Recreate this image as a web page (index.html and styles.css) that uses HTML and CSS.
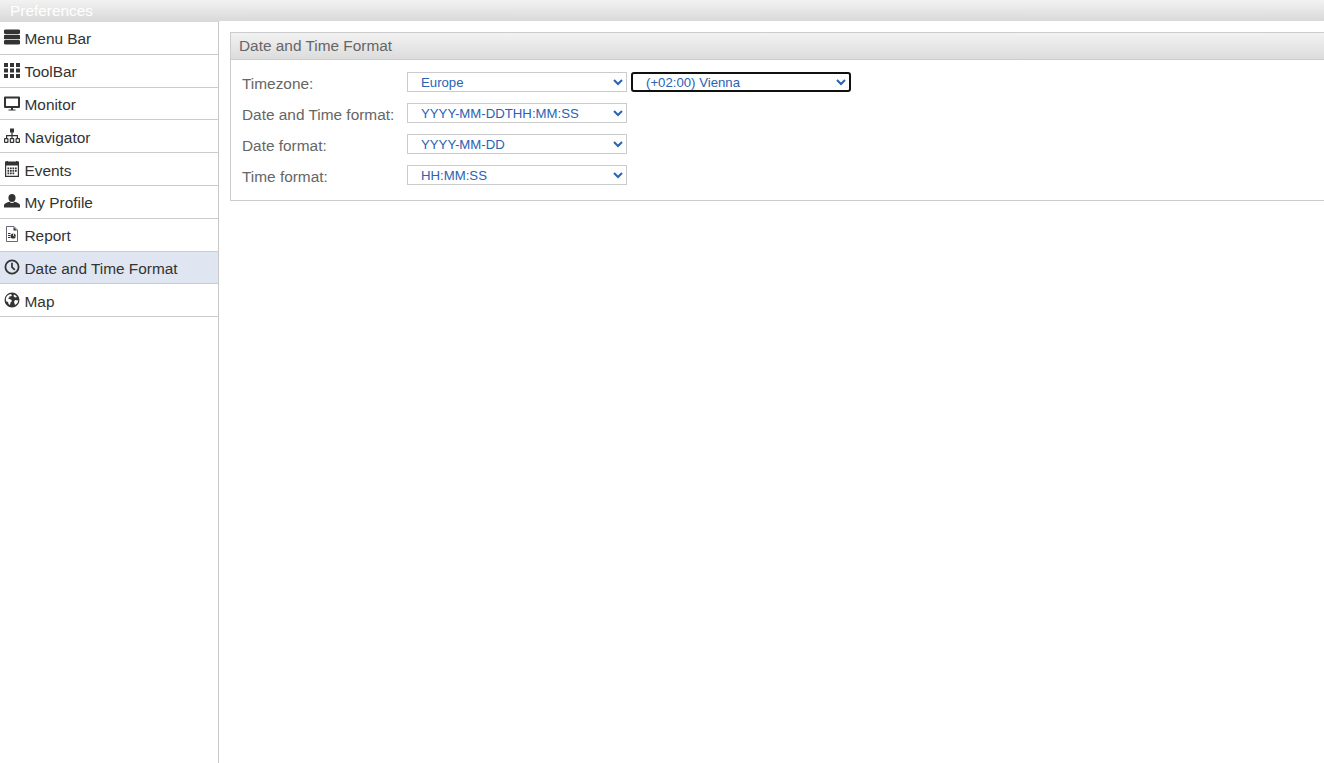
FILE: index.html
```html
<!DOCTYPE html>
<html lang="en">
<head>
    <meta charset="UTF-8">
    <meta name="viewport" content="width=device-width, initial-scale=1.0">
    <title>Preferences</title>
    <link rel="stylesheet" href="styles.css">
</head>
<body>
    <div class="title-bar">Preferences</div>
    <div class="content">
        <ul class="menu">
            <li>
                <svg class="icon" viewBox="0 0 16 16"><path d="M1.500.500h13a2 2 0 0 1 0 4.500h-13a2 2 0 0 1 0-4.500zM1.500 5.800h13a2 2 0 0 1 0 4.500h-13a2 2 0 0 1 0-4.500zM1.500 11h13a2 2 0 0 1 0 4.500h-13a2 2 0 0 1 0-4.500z"/></svg>
                Menu Bar
            </li>
            <li>
                <svg class="icon" viewBox="0 0 16 16"><path d="M0 1h4v4H0zM6 1h4v4H6zM12 1h4v4h-4zM0 6.500h4v4H0zM6 6.500h4v4H6zM12 6.500h4v4h-4zM0 12h4v4H0zM6 12h4v4H6zM12 12h4v4h-4z"/></svg>
                ToolBar
            </li>
            <li>
                <svg class="icon" viewBox="0 0 16 16"><path fill-rule="evenodd" d="M1 1.500h14a1 1 0 0 1 1 1v9.500a1 1 0 0 1-1 1H1a1 1 0 0 1-1-1V2.500a1 1 0 0 1 1-1zM2 3.500v7.500h12V3.500zM7 13h2v1.500h2.500v1h-7v-1H7z"/></svg>
                Monitor
            </li>
            <li>
                <svg class="icon" viewBox="0 0 16 16"><path fill-rule="evenodd" d="M6 .5h4V4.500H8.600V7H14v3h1a1 1 0 0 1 1 1v3a1 1 0 0 1-1 1h-2.500a1 1 0 0 1-1-1v-3a1 1 0 0 1 1-1h.3V8.300H8.600V10h.7a1 1 0 0 1 1 1v3a1 1 0 0 1-1 1H6.700a1 1 0 0 1-1-1v-3a1 1 0 0 1 1-1h.7V8.300H3.200V10h.3a1 1 0 0 1 1 1v3a1 1 0 0 1-1 1H1a1 1 0 0 1-1-1v-3a1 1 0 0 1 1-1h1V7h5.400V4.500H6zM1.200 11.200v2.600h2.100v-2.600zM6.900 11.200v2.600h2.200v-2.600zM12.700 11.200v2.600h2.100v-2.600z"/></svg>
                Navigator
            </li>
            <li>
                <svg class="icon" viewBox="0 0 16 16"><path fill-rule="evenodd" d="M1 .5h1.500V0h1.500v.5h8V0h1.500v.5H15V16H1zM2.200 4.500v10.300h11.600V4.500z"/><path d="M3.500 6.500h1.700v1.700H3.500zM6 6.500h1.700v1.700H6zM8.500 6.500h1.700v1.700H8.500zM11 6.500h1.700v1.700H11zM3.500 9h1.700v1.700H3.500zM6 9h1.700v1.700H6zM8.500 9h1.700v1.700H8.500zM11 9h1.700v1.700H11zM3.500 11.500h1.700v1.700H3.500zM6 11.500h1.700v1.700H6zM8.500 11.500h1.700v1.700H8.500z"/></svg>
                Events
            </li>
            <li>
                <svg class="icon" viewBox="0 0 16 16"><path d="M8 1c2.200 0 3.600 1.600 3.600 3.900S10.100 9 8 9 4.400 7.200 4.400 4.900 5.800 1 8 1zM5.500 8.800C6.200 9.600 7 10 8 10s1.800-.4 2.500-1.200c2.600.6 4.500 1.700 5.500 3V14.500H0v-2.700c1-1.300 2.900-2.400 5.500-3z"/></svg>
                My Profile
            </li>
            <li>
                <svg class="icon report" viewBox="0 0 16 16"><path fill="none" stroke="currentColor" d="M2.500.5h7.500l3.500 3.500v11.500h-11z"/><path d="M9.500 1v3.500H13z"/><path d="M4 7h2.500v1H4zM4 9h2.500v1H4zM4 11h2.500v1H4z"/><circle cx="9.200" cy="10" r="2.600"/><path fill="#fff" d="M9.200 10V7.400h.8v2.600h2v.6z"/></svg>
                Report
            </li>
            <li class="selected">
                <svg class="icon" viewBox="0 0 16 16"><path fill-rule="evenodd" d="M8 .5a7.500 7.500 0 1 1 0 15 7.500 7.500 0 0 1 0-15zM8 2.300a5.700 5.700 0 1 0 0 11.400A5.700 5.700 0 0 0 8 2.300z"/><path d="M7.100 3.800h1.700v3.900l2.600 2.600-1.200 1.200-3.100-3.100z"/></svg>
                Date and Time Format
            </li>
            <li>
                <svg class="icon" viewBox="0 0 16 16"><path fill-rule="evenodd" d="M8 .5a7.500 7.500 0 1 1 0 15 7.500 7.500 0 0 1 0-15zM3 4C1.800 5.500 1.500 7.500 2.200 9.300l2 1 .3 1.700 1.500 1 .5-2.500 1.500-1.500-1-1.500-2-.5-1-1 1.500-.5L5.500 4l1.500.5L8 3 6.500 2C5.200 2.300 4 3 3 4zM10 2.500 9.500 4l1.500 1.500 2-.5c-.7-1.200-1.800-2.100-3-2.500zM11 8l-1 2 1 3 2-1.500c.8-1 1.200-2 1.300-3z"/></svg>
                Map
            </li>
        </ul>
        <div class="main">
            <div class="panel">
                <div class="panel-title">Date and Time Format</div>
                <div class="panel-body">
                    <div class="row">
                        <label>Timezone:</label>
                        <select>
                            <option>Europe</option>
                        </select>
                        <select class="focused">
                            <option>(+02:00) Vienna</option>
                        </select>
                    </div>
                    <div class="row">
                        <label>Date and Time format:</label>
                        <select>
                            <option>YYYY-MM-DDTHH:MM:SS</option>
                        </select>
                    </div>
                    <div class="row">
                        <label>Date format:</label>
                        <select>
                            <option>YYYY-MM-DD</option>
                        </select>
                    </div>
                    <div class="row">
                        <label>Time format:</label>
                        <select>
                            <option>HH:MM:SS</option>
                        </select>
                    </div>
                </div>
            </div>
        </div>
    </div>
</body>
</html>
```

FILE: styles.css
```css
html, body { height: 100%; }
body {
    margin: 0;
    overflow: hidden;
    display: flex;
    flex-direction: column;
    font-family: "Liberation Sans", Arial, sans-serif;
    font-size: 15.4px;
    color: #333;
    background: #fff;
}

.title-bar {
    height: 21px;
    line-height: 22px;
    padding-left: 10px;
    color: #fff;
    background: linear-gradient(#f2f2f2, #d9d9d9);
    flex: none;
}

.content { flex: 1; display: flex; min-height: 0; }

/* Menu de gauche */
.menu {
    width: 218px;
    flex: none;
    margin: 0;
    padding: 0;
    list-style: none;
    border-right: 1px solid #c8c8c8;
    border-top: 1px solid #d8d8d8;
}
.menu li {
    display: flex;
    align-items: center;
    gap: 4.5px;
    height: 32.8px;
    box-sizing: border-box;
    padding: 3px 0 0 4px;
    border-bottom: 1px solid #ccc;
}
.menu li.selected { background: #dfe6f1; }
.icon { width: 16px; height: 16px; flex: none; fill: #333; color: #333; margin-top: -4px; }
.icon.report { color: #667; }

.main { flex: 1; min-width: 0; padding: 11px 0 0 11px; }

.panel {
    width: calc(100% + 2px);
    border: 1px solid #ccc;
    box-sizing: border-box;
    height: 169px;
}
.panel-title {
    height: 26px;
    line-height: 26px;
    padding-left: 8px;
    color: #666;
    background: linear-gradient(#f2f2f2, #dcdcdc);
    border-bottom: 1px solid #ccc;
}
.panel-body { padding: 12px 0 0 11px; }

.row { display: flex; align-items: flex-start; height: 31px; }
.row label { width: 165px; flex: none; color: #666; line-height: 24px; }

select {
    width: 220px;
    height: 20px;
    box-sizing: border-box;
    padding: 0 0 0 9px;
    font-family: inherit;
    font-size: 13.2px;
    color: #2a62b4;
    background: #fff;
    border: 1px solid #ccc;
    border-radius: 0;
}
select.focused {
    margin-left: 4px;
    border: 2px solid #101010;
    border-radius: 3px;
}
```
